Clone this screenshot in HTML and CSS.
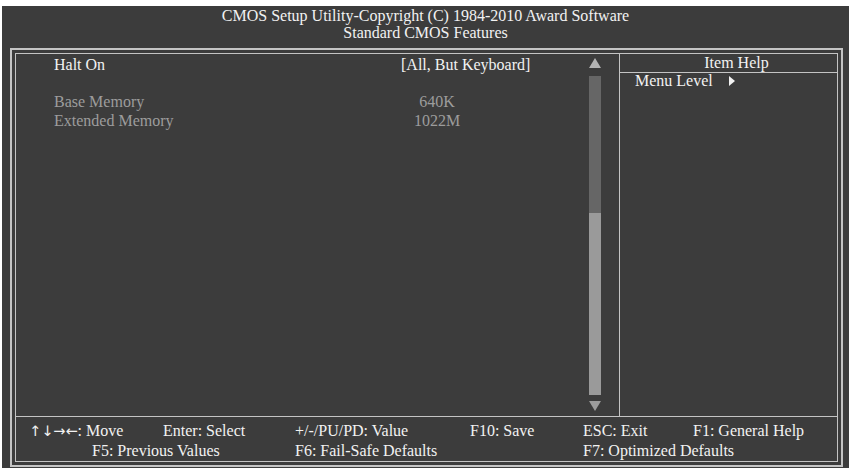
FILE: index.html
```html
<!DOCTYPE html>
<html lang="en">
<head>
    <meta charset="UTF-8">
    <title>Standard CMOS Features</title>
    <link rel="stylesheet" href="styles.css">
</head>
<body>
    <div class="screen">
        <div class="title">
            <div>CMOS Setup Utility-Copyright (C) 1984-2010 Award Software</div>
            <div>Standard CMOS Features</div>
        </div>

        <div class="frame">
            <div class="inner">
                <div class="main">
                    <div class="list">
                        <div class="row">
                            <span class="label">Halt On</span>
                            <span class="value">[All, But Keyboard]</span>
                        </div>
                        <div class="row blank"></div>
                        <div class="row dim">
                            <span class="label">Base Memory</span>
                            <span class="value mem">640K</span>
                        </div>
                        <div class="row dim">
                            <span class="label">Extended Memory</span>
                            <span class="value mem">1022M</span>
                        </div>
                    </div>

                    <div class="scroll">
                        <svg class="arrow" width="12" height="10" viewBox="0 0 12 10"><polygon points="6,0 12,10 0,10"/></svg>
                        <div class="track"><div class="thumb"></div></div>
                        <svg class="arrow down" width="12" height="10" viewBox="0 0 12 10"><polygon points="0,0 12,0 6,10"/></svg>
                    </div>

                    <div class="help">
                        <div class="help-head">Item Help</div>
                        <div class="help-body">
                            Menu Level
                            <svg class="menu-arrow" width="6" height="10" viewBox="0 0 6 10"><polygon points="0,0 6,5 0,10"/></svg>
                        </div>
                    </div>
                </div>

                <div class="footer">
                    <span class="c-move"><span class="keys">&uarr;&darr;&rarr;&larr;</span>: Move</span>
                    <span>Enter: Select</span>
                    <span>+/-/PU/PD: Value</span>
                    <span>F10: Save</span>
                    <span>ESC: Exit</span>
                    <span>F1: General Help</span>
                    <span class="c-f5">F5: Previous Values</span>
                    <span class="c-f6">F6: Fail-Safe Defaults</span>
                    <span class="c-f7">F7: Optimized Defaults</span>
                </div>
            </div>
        </div>
    </div>
</body>
</html>
```

FILE: styles.css
```css
body {
    margin: 0;
    background: #fff;
    font-family: "Liberation Serif", "Times New Roman", serif;
    font-size: 16px;
    color: #f2f2f2;
}
.screen {
    margin: 6px 0 0 2px;
    width: 847px;
    height: 462px;
    background: #3c3c3c;
    overflow: hidden;
}
.title {
    height: 42px;
    box-sizing: border-box;
    padding-top: 1px;
    line-height: 17px;
    text-align: center;
}
.frame {
    margin-left: 8px;
    width: 833px;
    height: 419px;
    box-sizing: border-box;
    border: 2px solid #c4c4c4;
    padding: 3px;
}
.inner {
    height: 100%;
    box-sizing: border-box;
    border: 1px solid #c4c4c4;
    display: flex;
    flex-direction: column;
}
.main {
    height: 362px;
    display: flex;
}
.list {
    width: 573px;
    box-sizing: border-box;
    padding: 1px 0 0 38px;
    line-height: 19px;
}
.row {
    display: flex;
}
.row.blank {
    height: 18px;
}
.label {
    width: 347px;
}
.dim {
    color: #9c9c9c;
}
.value.mem {
    width: 72px;
    text-align: center;
}
.scroll {
    width: 12px;
    margin-right: 18px;
    padding-top: 4px;
    display: flex;
    flex-direction: column;
}
.arrow {
    display: block;
    fill: #b4b4b4;
}
.arrow.down {
    margin-top: 6px;
    fill: #9c9c9c;
}
.track {
    margin-top: 8px;
    height: 319px;
    background: #666;
    display: flex;
    flex-direction: column;
    justify-content: flex-end;
}
.thumb {
    height: 182px;
    background: #9a9a9a;
}
.help {
    flex: 1;
    border-left: 1px solid #c4c4c4;
}
.help-head {
    height: 18px;
    line-height: 18px;
    padding-left: 16px;
    text-align: center;
    border-bottom: 1px solid #c4c4c4;
}
.help-body {
    padding-left: 15px;
    line-height: 15px;
}
.menu-arrow {
    fill: #f2f2f2;
    margin-left: 12px;
}
.footer {
    flex: 1;
    border-top: 1px solid #c4c4c4;
    box-sizing: border-box;
    padding: 4px 0 0 13px;
    line-height: 19px;
    display: grid;
    grid-template-columns: 63px 71px 132px 175px 113px 110px 1fr;
    align-content: start;
    white-space: nowrap;
}
.keys {
    font-family: "DejaVu Sans", sans-serif;
    font-size: 14.5px;
}
.c-move {
    grid-column: span 2;
}
.c-f5 {
    grid-column: 2 / span 2;
}
.c-f6 {
    grid-column: 4 / span 2;
}
.c-f7 {
    grid-column: 6 / span 2;
}
```
